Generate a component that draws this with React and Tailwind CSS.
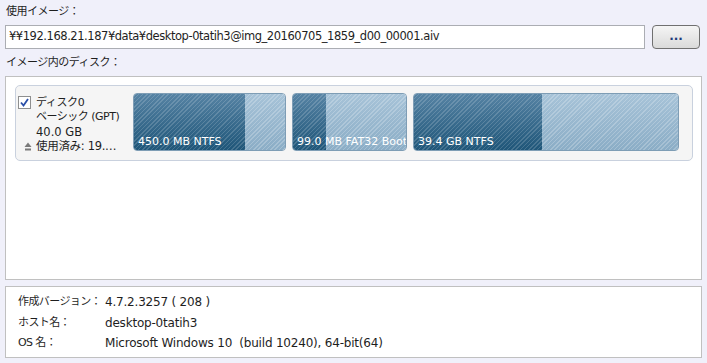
const ui = { fontFamily: '"DejaVu Sans", "Noto Sans CJK JP", sans-serif' };

const stripeDark =
  'bg-[repeating-linear-gradient(135deg,rgba(255,255,255,0.16)_0px,rgba(255,255,255,0.16)_1px,transparent_1px,transparent_3px),linear-gradient(#5683a4,#1f5679)]';
const stripeLight =
  'bg-[repeating-linear-gradient(135deg,rgba(255,255,255,0.22)_0px,rgba(255,255,255,0.22)_1px,transparent_1px,transparent_3px),linear-gradient(#a7c3d8,#8badc6)]';

function Partition({ width, used, label }) {
  return (
    <div
      className="relative h-[58px] rounded-[4px] border border-[#7e9db5] overflow-hidden flex shrink-0"
      style={{ width }}
    >
      <div className={`h-full ${stripeDark}`} style={{ width: used }} />
      <div className={`h-full flex-1 ${stripeLight}`} />
      <span className="absolute left-[4px] bottom-[1px] text-[11px] leading-[14px] text-white whitespace-nowrap">
        {label}
      </span>
    </div>
  );
}

function Checkbox() {
  return (
    <svg width="13" height="13" viewBox="0 0 13 13" className="shrink-0">
      <rect x="0.5" y="0.5" width="12" height="12" fill="#fff" stroke="#8e8f8f" />
      <path d="M3 6.5 L5.5 9.5 L10 3" fill="none" stroke="#2a4fa8" strokeWidth="1.8" />
    </svg>
  );
}

function UsedIcon() {
  return (
    <svg width="8" height="9" viewBox="0 0 8 9" className="shrink-0">
      <path d="M4 0.5 L7.5 5 L0.5 5 Z" fill="#7a7a7a" />
      <rect x="1" y="6.5" width="6" height="2" fill="#7a7a7a" />
    </svg>
  );
}

export default function App() {
  return (
    <div
      className="w-[707px] h-[363px] bg-[#f0f0fa] px-[5px] flex flex-col text-[11.5px] text-[#1e1e1e]"
      style={ui}
    >
      <div className="h-[25px] pt-[4px] leading-[16px] pl-[1px] text-[11px] tracking-[-0.5px]">使用イメージ：</div>
      <div className="flex gap-[7px] h-[24px]">
        <div className="flex-1 bg-white border border-[#abadb3] flex items-center pl-[3px] text-[11.5px] tracking-[-0.45px] whitespace-nowrap overflow-hidden">
          ¥¥192.168.21.187¥data¥desktop-0tatih3@img_20160705_1859_d00_00001.aiv
        </div>
        <button className="w-[48px] h-[24px] rounded-[4px] border border-[#707070] bg-gradient-to-b from-[#f5f5f5] to-[#dadada] text-[#1c3b7a] text-[12px] font-bold leading-none pb-[2px] mr-[2px]">
          ...
        </button>
      </div>
      <div className="h-[27px] pt-[6px] leading-[16px] pl-[1px] text-[11px] tracking-[-0.5px]">イメージ内のディスク：</div>
      <div className="h-[204px] bg-white border border-[#c0c0c0] pl-[9px] pr-[8px] pt-[8px]">
        <div className="h-[76px] rounded-[5px] border border-[#c9d1de] bg-[#f5f5f5] flex pt-[7px] pr-[11px]">
          <div className="w-[117px] pl-[2px] pt-[2px] shrink-0 whitespace-nowrap">
            <div className="flex items-center gap-[5px] leading-[15px]">
              <Checkbox />
              <span className="text-[11px] tracking-[-0.4px]">ディスク0</span>
            </div>
            <div className="pl-[18px] leading-[14.7px] text-[11px] tracking-[-0.5px]">ベーシック (GPT)</div>
            <div className="pl-[18px] leading-[14.7px]">40.0 GB</div>
            <div className="flex items-center gap-[4px] pl-[6px] leading-[14.7px] tracking-[-0.3px]">
              <UsedIcon />
              <span>使用済み: 19.…</span>
            </div>
          </div>
          <div className="flex gap-[6px]">
            <Partition width={153} used={111} label="450.0 MB NTFS" />
            <Partition width={115} used={33} label="99.0 MB FAT32 Boot" />
            <Partition width={266} used={128} label="39.4 GB NTFS" />
          </div>
        </div>
      </div>
      <div className="mt-[6px] h-[72px] bg-white border border-[#c0c0c0] pt-[5px] pl-[12px]">
        {[
          ['作成バージョン：', '4.7.2.3257 ( 208 )'],
          ['ホスト名：', 'desktop-0tatih3'],
          ['OS 名：', 'Microsoft Windows 10  (build 10240), 64-bit(64)'],
        ].map(([k, v]) => (
          <div key={k} className="flex h-[20.5px] items-center">
            <span className="w-[87px] shrink-0 whitespace-nowrap text-[11px] tracking-[-0.6px]">{k}</span>
            <span className="whitespace-pre text-[12px] tracking-[-0.2px]">{v}</span>
          </div>
        ))}
      </div>
    </div>
  );
}
